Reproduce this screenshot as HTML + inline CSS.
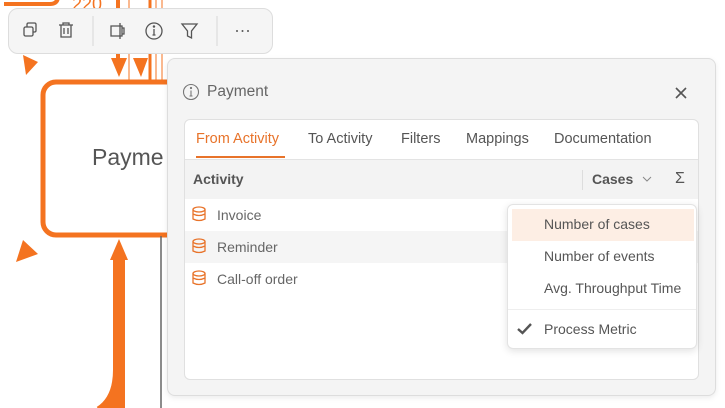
<!DOCTYPE html>
<html><head><style>
*{margin:0;padding:0;box-sizing:border-box}
body{width:725px;height:408px;overflow:hidden;background:#fff;font-family:"Liberation Sans",sans-serif;position:relative;color:#555}
.abs{position:absolute}
</style></head><body>
<svg class="abs" style="left:0;top:0" width="725" height="408">
 <g fill="none" stroke="#f47320">
  <path d="M4 4 H50 Q58 4 58 -4" stroke-width="4"/>
  <line x1="118" y1="0" x2="118" y2="60" stroke-width="4"/>
  <line x1="129" y1="0" x2="129" y2="80" stroke-width="1"/>
  <line x1="150" y1="0" x2="150" y2="80" stroke-width="3"/>
  <line x1="156" y1="0" x2="156" y2="80" stroke-width="1"/>
  <line x1="162" y1="0" x2="162" y2="80" stroke-width="1"/>
  <path d="M119 408 V290 L119 258" stroke-width="12"/>
  <path d="M119 370 Q119 400 100 412" stroke-width="12"/>
 </g>
 <rect x="43" y="82" width="150" height="153" rx="13" fill="#fff" stroke="#f47320" stroke-width="5"/>
 <polygon fill="#f47320" points="111,58 127,58 119,77"/>
 <polygon fill="#f47320" points="133,58 148,58 141,77"/>
 <polygon fill="#f47320" points="119,239 110,260 128,260"/>
 <polygon fill="#f47320" points="23,55 38,62 26,75"/>
 <polygon fill="#f47320" points="23,240 38,254 16,262"/>
 <line x1="161" y1="236" x2="161" y2="408" stroke="#666" stroke-width="1.5"/>
</svg>
<div class="abs" style="left:92px;top:144px;font-size:23px;color:#555">Payme</div>
<div class="abs" style="left:72px;top:-6px;font-size:18px;color:#f47320">220</div>
<div class="abs" style="left:8px;top:8px;width:265px;height:46px;background:#f5f5f5;border:1px solid #ddd;border-radius:10px"></div>
<svg class="abs" style="left:8px;top:8px" width="265" height="46" fill="none" stroke="#555" stroke-width="1.3">
 <rect x="16" y="19" width="9" height="9" rx="1.5"/><path d="M19 19 V16.5 Q19 15 20.5 15 H26.5 Q28 15 28 16.5 V22.5 Q28 24 26.5 24 H25"/>
 <path d="M51 17 H65 M55 17 V15 H61 V17 M53 17 V29 H63 V17 M56 20 V26 M60 20 V26"/>
 <line x1="85" y1="8" x2="85" y2="38" stroke="#ddd"/>
 <path d="M103 18 H114 V28 H103 Z M114 20 H116 V26 H114 M112 15 V31"/>
 <circle cx="146" cy="23" r="8"/><path d="M146 21 V27 M144.5 27 H147.5" /><circle cx="146" cy="18.5" r=".6" fill="#555"/>
 <path d="M174 16 H189 L183.5 23 V30 L179.5 28 V23 Z"/>
 <line x1="209" y1="8" x2="209" y2="38" stroke="#ddd"/>
 <circle cx="229" cy="23" r="1" fill="#555" stroke="none"/><circle cx="234.5" cy="23" r="1" fill="#555" stroke="none"/><circle cx="240" cy="23" r="1" fill="#555" stroke="none"/>
</svg>
<div class="abs" style="left:167px;top:58px;width:549px;height:338px;background:#f4f4f4;border:1px solid #ddd;border-radius:8px;box-shadow:0 2px 6px rgba(0,0,0,.08)"></div>
<svg class="abs" style="left:182px;top:82px" width="20" height="20" fill="none" stroke="#777" stroke-width="1.1"><circle cx="9" cy="10" r="7.5"/><path d="M9 8.5 V14 M7.5 14 H10.5"/><circle cx="9" cy="6" r=".6" fill="#777"/></svg>
<div class="abs" style="left:207px;top:83px;font-size:15.5px;color:#666">Payment</div>
<svg class="abs" style="left:674px;top:86px" width="14" height="14" stroke="#555" stroke-width="1.6"><path d="M2 2 L12 12 M12 2 L2 12"/></svg>
<div class="abs" style="left:184px;top:119px;width:515px;height:261px;background:#fff;border:1px solid #e0e0e0;border-radius:6px;overflow:hidden">
 <div style="height:40px;border-bottom:1px solid #e3e3e3;position:relative;font-size:14.5px;color:#555">
  <span class="abs" style="left:11px;top:11px;color:#e8732a">From Activity</span>
  <div class="abs" style="left:11px;top:36px;width:89px;height:2px;background:#e8732a"></div>
  <span class="abs" style="left:123px;top:11px">To Activity</span>
  <span class="abs" style="left:216px;top:11px">Filters</span>
  <span class="abs" style="left:281px;top:11px">Mappings</span>
  <span class="abs" style="left:369px;top:11px">Documentation</span>
 </div>
 <div style="height:39px;background:#f3f3f3;position:relative;font-size:14px;font-weight:bold;color:#555">
  <span class="abs" style="left:8px;top:11px">Activity</span>
  <div class="abs" style="left:397px;top:10px;width:1px;height:20px;background:#ddd"></div>
  <span class="abs" style="left:407px;top:11px">Cases</span>
  <svg class="abs" style="left:456px;top:15px" width="12" height="8" fill="none" stroke="#888"><path d="M2 2 L6 6 L10 2"/></svg>
  <span class="abs" style="left:490px;top:10px;font-weight:normal;font-size:16px">Σ</span>
 </div>
 <div style="font-size:14px;color:#666">
  <div style="height:32px;position:relative"><span class="abs" style="left:32px;top:8px">Invoice</span></div>
  <div style="height:32px;position:relative;background:#f5f5f5"><span class="abs" style="left:32px;top:8px">Reminder</span></div>
  <div style="height:32px;position:relative"><span class="abs" style="left:32px;top:8px">Call-off order</span></div>
 </div>
</div>
<svg class="abs" style="left:191px;top:206px" width="16" height="90" fill="none" stroke="#e8732a" stroke-width="1.3">
 <g><ellipse cx="8" cy="3.5" rx="6" ry="2.5"/><path d="M2 3.5 V13 Q8 16 14 13 V3.5 M2 8 Q8 11 14 8"/></g>
 <g transform="translate(0,32)"><ellipse cx="8" cy="3.5" rx="6" ry="2.5"/><path d="M2 3.5 V13 Q8 16 14 13 V3.5 M2 8 Q8 11 14 8"/></g>
 <g transform="translate(0,64)"><ellipse cx="8" cy="3.5" rx="6" ry="2.5"/><path d="M2 3.5 V13 Q8 16 14 13 V3.5 M2 8 Q8 11 14 8"/></g>
</svg>
<div class="abs" style="left:507px;top:204px;width:190px;height:145px;background:#fff;border:1px solid #e3e3e3;border-radius:6px;box-shadow:0 2px 8px rgba(0,0,0,.12);font-size:14px;color:#555">
 <div class="abs" style="left:4px;top:4px;width:182px;height:32px;background:#fdeee4"></div>
 <span class="abs" style="left:36px;top:11px">Number of cases</span>
 <span class="abs" style="left:36px;top:43px">Number of events</span>
 <span class="abs" style="left:36px;top:75px">Avg. Throughput Time</span>
 <div class="abs" style="left:0;top:104px;width:188px;height:1px;background:#eee"></div>
 <svg class="abs" style="left:8px;top:117px" width="18" height="14" fill="none" stroke="#555" stroke-width="2.4"><path d="M2 7 L6.5 11 L15 2"/></svg>
 <span class="abs" style="left:36px;top:116px">Process Metric</span>
</div>
</body></html>
